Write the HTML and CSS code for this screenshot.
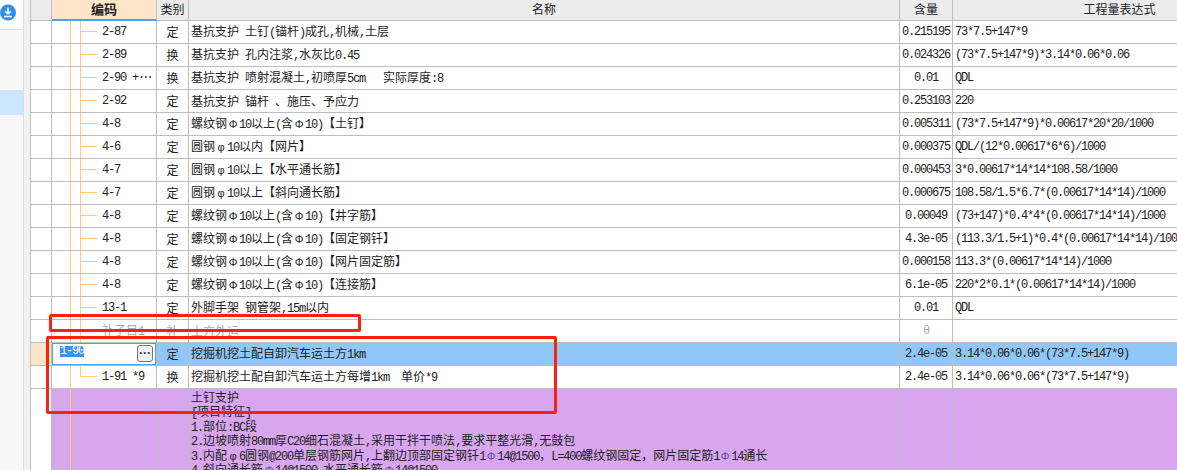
FILE: index.html
```html
<!DOCTYPE html>
<html lang="zh-CN">
<head>
    <meta charset="UTF-8">
    <title>工程量表达式</title>
    <link rel="stylesheet" href="styles.css">
</head>
<body>
<div class="sheet">
    <!-- 左侧导航 -->
    <div class="side">
        <div class="side-top">
            <svg class="side-icon" width="17" height="17" viewBox="0 0 17 17">
                <circle cx="8" cy="8.5" r="8" fill="#2f8fef"/>
                <path d="M8 3.5v6M5.2 7.2L8 10l2.8-2.8M4 12.5h8" fill="none" stroke="#fff" stroke-width="1.5"/>
            </svg>
        </div>
        <div class="side-active"></div>
    </div>
    <div class="gutter"></div>

    <!-- 表格 -->
    <div class="grid-wrap">
        <table class="grid">
            <colgroup>
                <col class="c-no"><col class="c-code"><col class="c-type"><col class="c-name"><col class="c-qty"><col class="c-expr">
            </colgroup>
            <thead>
                <tr>
                    <th></th>
                    <th class="th-code">编码</th>
                    <th>类别</th>
                    <th>名称</th>
                    <th>含量</th>
                    <th>工程量表达式</th>
                </tr>
            </thead>
            <tbody>
                <tr><td></td><td class="code">2-87</td><td class="type">定</td><td class="name">基抗支护 土钉<span class="n">(</span>锚杆<span class="n">)</span>成孔<span class="n">,</span>机械<span class="n">,</span>土层</td><td class="qty">0.215195</td><td class="expr">73*7.5+147*9</td></tr>
                <tr><td></td><td class="code">2-89</td><td class="type">换</td><td class="name">基抗支护 孔内注浆<span class="n">,</span>水灰比<span class="n">0.45</span></td><td class="qty">0.024326</td><td class="expr">(73*7.5+147*9)*3.14*0.06*0.06</td></tr>
                <tr><td></td><td class="code">2-90 +<span class="dots">···</span></td><td class="type">换</td><td class="name">基抗支护 喷射混凝土<span class="n">,</span>初喷厚<span class="n">5cm</span>&nbsp;&nbsp;&nbsp;实际厚度<span class="n">:8</span></td><td class="qty">0.01</td><td class="expr">QDL</td></tr>
                <tr><td></td><td class="code">2-92</td><td class="type">定</td><td class="name">基抗支护 锚杆 、施压、予应力</td><td class="qty">0.253103</td><td class="expr">220</td></tr>
                <tr><td></td><td class="code">4-8</td><td class="type">定</td><td class="name">螺纹钢<span class="fw">Φ</span><span class="n">10</span>以上<span class="n">(</span>含<span class="fw">Φ</span><span class="n">10)</span>【土钉】</td><td class="qty">0.005311</td><td class="expr">(73*7.5+147*9)*0.00617*20*20/1000</td></tr>
                <tr><td></td><td class="code">4-6</td><td class="type">定</td><td class="name">圆钢<span class="fw">φ</span><span class="n">10</span>以内【网片】</td><td class="qty">0.000375</td><td class="expr">QDL/(12*0.00617*6*6)/1000</td></tr>
                <tr><td></td><td class="code">4-7</td><td class="type">定</td><td class="name">圆钢<span class="fw">φ</span><span class="n">10</span>以上【水平通长筋】</td><td class="qty">0.000453</td><td class="expr">3*0.00617*14*14*108.58/1000</td></tr>
                <tr><td></td><td class="code">4-7</td><td class="type">定</td><td class="name">圆钢<span class="fw">φ</span><span class="n">10</span>以上【斜向通长筋】</td><td class="qty">0.000675</td><td class="expr">108.58/1.5*6.7*(0.00617*14*14)/1000</td></tr>
                <tr><td></td><td class="code">4-8</td><td class="type">定</td><td class="name">螺纹钢<span class="fw">Φ</span><span class="n">10</span>以上<span class="n">(</span>含<span class="fw">Φ</span><span class="n">10)</span>【井字筋】</td><td class="qty">0.00049</td><td class="expr">(73+147)*0.4*4*(0.00617*14*14)/1000</td></tr>
                <tr><td></td><td class="code">4-8</td><td class="type">定</td><td class="name">螺纹钢<span class="fw">Φ</span><span class="n">10</span>以上<span class="n">(</span>含<span class="fw">Φ</span><span class="n">10)</span>【固定钢钎】</td><td class="qty">4.3e-05</td><td class="expr">(113.3/1.5+1)*0.4*(0.00617*14*14)/1000</td></tr>
                <tr><td></td><td class="code">4-8</td><td class="type">定</td><td class="name">螺纹钢<span class="fw">Φ</span><span class="n">10</span>以上<span class="n">(</span>含<span class="fw">Φ</span><span class="n">10)</span>【网片固定筋】</td><td class="qty">0.000158</td><td class="expr">113.3*(0.00617*14*14)/1000</td></tr>
                <tr><td></td><td class="code">4-8</td><td class="type">定</td><td class="name">螺纹钢<span class="fw">Φ</span><span class="n">10</span>以上<span class="n">(</span>含<span class="fw">Φ</span><span class="n">10)</span>【连接筋】</td><td class="qty">6.1e-05</td><td class="expr">220*2*0.1*(0.00617*14*14)/1000</td></tr>
                <tr><td></td><td class="code">13-1</td><td class="type">定</td><td class="name">外脚手架 钢管架<span class="n">,15m</span>以内</td><td class="qty">0.01</td><td class="expr">QDL</td></tr>
                <tr class="dim"><td></td><td class="code">补子目<span class="n">1</span></td><td class="type">补</td><td class="name">土方外运</td><td class="qty">θ</td><td class="expr"></td></tr>
                <tr class="selected">
                    <td class="no-active"></td>
                    <td class="editor">
                        <div class="editor-box">
                            <span class="editor-text">1-90</span>
                            <span class="editor-btn">···</span>
                        </div>
                    </td>
                    <td class="type">定</td><td class="name">挖掘机挖土配自卸汽车运土方<span class="n">1km</span></td><td class="qty">2.4e-05</td><td class="expr">3.14*0.06*0.06*(73*7.5+147*9)</td>
                </tr>
                <tr><td></td><td class="code code-last">1-91 *9</td><td class="type">换</td><td class="name">挖掘机挖土配自卸汽车运土方每增<span class="n">1km</span>&nbsp;&nbsp;单价<span class="n">*9</span></td><td class="qty">2.4e-05</td><td class="expr">3.14*0.06*0.06*(73*7.5+147*9)</td></tr>
                <tr class="note">
                    <td></td>
                    <td class="code-note"></td>
                    <td></td>
                    <td class="name">
                        <div>土钉支护</div>
                        <div><span class="n">[</span>项目特征<span class="n">]</span></div>
                        <div><span class="n">1.</span>部位<span class="n">:BC</span>段</div>
                        <div><span class="n">2.</span>边坡喷射<span class="n">80mm</span>厚<span class="n">C20</span>细石混凝土<span class="n">,</span>采用干拌干喷法<span class="n">,</span>要求平整光滑<span class="n">,</span>无鼓包</div>
                        <div><span class="n">3.</span>内配<span class="fw">φ</span><span class="n">6</span>圆钢<span class="n">@200</span>单层钢筋网片<span class="n">,</span>上翻边顶部固定钢钎<span class="n">1</span><span class="fw rebar">Φ</span><span class="n">14@1500</span>，<span class="n">L=400</span>螺纹钢固定，网片固定筋<span class="n">1</span><span class="fw rebar">Φ</span><span class="n">14</span>通长</div>
                        <div><span class="n">4.</span>斜向通长筋<span class="fw rebar">Φ</span><span class="n">14@1500,</span>水平通长筋<span class="fw rebar">Φ</span><span class="n">14@1500</span></div>
                    </td>
                    <td></td>
                    <td></td>
                </tr>
            </tbody>
        </table>
    </div>

    <!-- 红框标注 -->
    <div class="mark mark-a"></div>
    <div class="mark mark-b"></div>
</div>
</body>
</html>
```

FILE: styles.css
```css
html, body {
    margin: 0;
    padding: 0;
    height: 470px;
    overflow: hidden;
    background: #fff;
}

.sheet {
    position: relative;
    display: flex;
    height: 470px;
    overflow: hidden;
    font-family: "Noto Sans CJK SC", "Liberation Sans", sans-serif;
    font-size: 12px;
    color: #222;
}

/* 左侧导航 */
.side {
    width: 23px;
    flex: none;
    background: #f8f8f8;
    border-right: 1px solid #dcdcdc;
}

.side-top {
    height: 29px;
    background: #fff;
    border-bottom: 1px solid #ddd;
}

.side-icon {
    display: block;
    padding-top: 4px;
}

.side-active {
    height: 25px;
    margin-top: 60px;
    background: #cce6ff;
}

.gutter {
    width: 6px;
    flex: none;
    background: #f1f1f1;
}

/* 表格 */
.grid-wrap {
    flex: 1;
    overflow: hidden;
    border-left: 1px solid #bdbdbd;
}

.grid {
    table-layout: fixed;
    width: 1256px;
    border-collapse: separate;
    border-spacing: 0;
}

.c-no { width: 21px; }
.c-code { width: 105px; }
.c-type { width: 32px; }
.c-name { width: 711px; }
.c-qty { width: 53px; }
.c-expr { width: 334px; }

th {
    height: 21px;
    padding: 0 0 2px;
    box-sizing: border-box;
    line-height: 16px;
    font-weight: normal;
    background: #ececec;
    border-right: 1px solid #bdbdbd;
    border-bottom: 1px solid #bdbdbd;
}

.th-code {
    font-size: 13px;
    font-weight: bold;
    background: #ffe6c8;
    border-bottom: 2px solid #4a9ff0;
}

td {
    height: 23px;
    padding: 0;
    box-sizing: border-box;
    line-height: 16px;
    border-right: 1px solid #bdbdbd;
    border-bottom: 1px solid #bdbdbd;
    white-space: nowrap;
    overflow: hidden;
}

/* 西文按等宽 6px 排 */
.n, .qty, .expr, .code {
    font-family: "Liberation Mono", monospace;
    font-size: 12px;
    letter-spacing: -1.2px;
}

/* 钢筋符号占一个汉字宽 */
.fw {
    display: inline-block;
    width: 12px;
    text-align: center;
    font-family: "Liberation Sans", sans-serif;
    font-size: 11px;
}

.rebar {
    color: #5a4fb0;
}

.dots {
    letter-spacing: -3px;
}

/* 树形连线 */
.code {
    padding-left: 50px;
    background-image:
        linear-gradient(#ffc978, #ffc978),
        linear-gradient(#ffc978, #ffc978),
        linear-gradient(#ffc978, #ffc978);
    background-repeat: no-repeat;
    background-size: 1px 100%, 1px 100%, 16px 1px;
    background-position: 18px 0, 28px 0, 29px 10px;
}

.code-last {
    background-size: 1px 100%, 1px 11px, 16px 1px;
}

.type {
    text-align: center;
}

.name {
    padding-left: 2px;
    word-spacing: 3.3px;
}

.qty {
    text-align: center;
}

.expr {
    padding-left: 2px;
}

.dim td {
    color: #aaa;
}

.dim .code {
    font-family: "Noto Sans CJK SC", sans-serif;
    letter-spacing: 0;
    background-image:
        linear-gradient(#ffc978, #ffc978),
        linear-gradient(#ffc978, #ffc978),
        linear-gradient(#e4e4e4, #e4e4e4);
}

.dim .code .n {
    font-family: "Liberation Mono", monospace;
}

/* 当前行 */
.selected td {
    background: #90c7f6;
}

.selected .no-active {
    background: #ffe6c8;
}

.selected .editor {
    padding: 0;
    background: #fff;
    vertical-align: top;
}

.editor-box {
    display: flex;
    justify-content: space-between;
    height: 22px;
    box-sizing: border-box;
    padding: 2px 2px 0 7px;
    border: 1px solid #4a9ff0;
}

.editor-text {
    height: 11px;
    line-height: 11px;
    font-family: "Liberation Mono", monospace;
    font-size: 12px;
    letter-spacing: -1.2px;
    color: #fff;
    background: #3d8ff0;
}

.editor-btn {
    width: 14px;
    height: 15px;
    margin-top: -1px;
    line-height: 14px;
    text-align: center;
    font-family: "Liberation Sans", sans-serif;
    font-size: 12px;
    font-weight: bold;
    color: #333;
    background: #eef0f6;
    border: 1px solid #777;
    border-radius: 3px;
}

/* 备注行 */
.note td {
    height: 100px;
    padding-top: 1px;
    vertical-align: top;
    background: #d7a6ec;
}

.note td:first-child {
    background: #fff;
}

.note .code-note {
    background-image: linear-gradient(#ffc978, #ffc978);
    background-repeat: no-repeat;
    background-size: 1px 100%;
    background-position: 18px 0;
}

.note .name div {
    height: 14.4px;
    line-height: 14.4px;
}

/* 红框标注 */
.mark {
    position: absolute;
    box-sizing: border-box;
    border: 3px solid #ff2015;
    border-radius: 2px;
}

.mark-a {
    left: 49px;
    top: 314px;
    width: 312px;
    height: 18px;
}

.mark-b {
    left: 46px;
    top: 336px;
    width: 511px;
    height: 78px;
}
```
